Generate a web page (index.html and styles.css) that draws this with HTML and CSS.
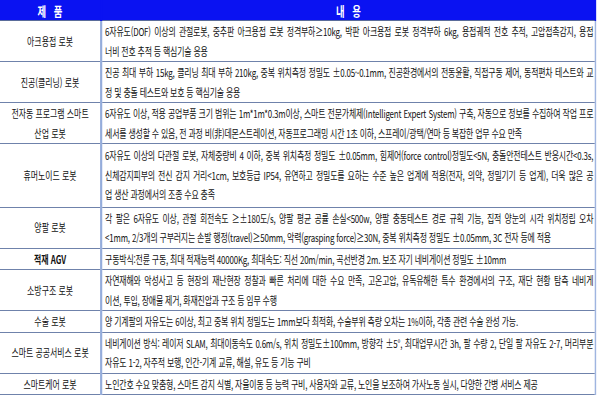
FILE: index.html
```html
<!DOCTYPE html>
<html lang="ko">
<head>
<meta charset="utf-8">
<title>로봇 제품</title>
<link rel="stylesheet" href="styles.css">
</head>
<body>
<div class="frame">
<div class="sheet">
<table class="spec">
  <thead>
    <tr><th class="h1">제 품</th><th class="h2">내 용</th></tr>
  </thead>
  <tbody>
    <tr><td class="c1">아크용접 로봇</td><td class="c2"><span class="ln">6자유도(DOF) 이상의 관절로봇, 중추판 아크용접 로봇 정격부하≥10kg, 박판 아크용접 로봇 정격부하 6kg, 용접궤적 전호 추적, 고압접촉감지, 용접</span><span class="ln">너비 전호 추적 등 핵심기술 응용</span></td></tr>
    <tr><td class="c1">진공(클리닝) 로봇</td><td class="c2"><span class="ln">진공 최대 부하 15kg, 클리닝 최대 부하 210kg, 중복 위치측정 정밀도 ±0.05~0.1mm, 진공환경에서의 전동윤활, 직접구동 제어, 동적편차 테스트와 교</span><span class="ln">정 및 충돌 테스트와 보호 등 핵심기술 응용</span></td></tr>
    <tr><td class="c1">전자동 프로그램 스마트 산업 로봇</td><td class="c2"><span class="ln">6자유도 이상, 적용 공업부품 크기 범위는 1m*1m*0.3m이상, 스마트 전문가체제(Intelligent Expert System) 구축, 자동으로 정보를 수집하여 작업 프로</span><span class="ln">세서를 생성할 수 있음, 전 과정 비(非)데몬스트레이션, 자동프로그래밍 시간 1초 이하, 스프레이/광택/연마 등 복잡한 업무 수요 만족</span></td></tr>
    <tr class="tall"><td class="c1">휴머노이드 로봇</td><td class="c2"><span class="ln">6자유도 이상의 다관절 로봇, 자체중량비 4 이하, 중복 위치측정 정밀도 ±0.05mm, 힘제어(force control)정밀도&lt;5N, 충돌안전테스트 반응시간&lt;0.3s,</span><span class="ln">신체감지피부의 전신 감지 거리&lt;1cm, 보호등급 IP54, 유연하고 정밀도를 요하는 수준 높은 업계에 적용(전자, 의약, 정밀기기 등 업계), 더욱 많은 공</span><span class="ln">업 생산 과정에서의 조종 수요 충족</span></td></tr>
    <tr><td class="c1">양팔 로봇</td><td class="c2"><span class="ln">각 팔은 6자유도 이상, 관절 회전속도 ≥±180도/s, 양팔 평균 공률 손실&lt;500w, 양팔 충동테스트 경로 규획 기능, 집적 양눈의 시각 위치정립 오차</span><span class="ln">&lt;1mm, 2/3개의 구부러지는 손발 행정(travel)≥50mm, 악력(grasping force)≥30N, 중복 위치측정 정밀도 ±0.05mm, 3C 전자 등에 적용</span></td></tr>
    <tr><td class="c1 b">적재 AGV</td><td class="c2"><span class="ln">구동박식:전륜 구동, 최대 적재능력 40000Kg, 최대속도: 직선 20m/min, 곡선반경 2m. 보조 자기 네비게이션 정밀도 ±10mm</span></td></tr>
    <tr><td class="c1">소방구조 로봇</td><td class="c2"><span class="ln">자연재해와 악성사고 등 현장의 재난현장 정찰과 빠른 처리에 대한 수요 만족, 고온고압, 유독유해한 특수 환경에서의 구조, 재단 현황 탐측 네비게</span><span class="ln">이션, 투입, 장애물 제거, 화재진압과 구조 등 임무 수행</span></td></tr>
    <tr><td class="c1">수술 로봇</td><td class="c2"><span class="ln">양 기계팔의 자유도는 6이상, 최고 중복 위치 정밀도는 1mm보다 최적화, 수술부위 측량 오차는 1%이하, 각종 관련 수술 완성 가능.</span></td></tr>
    <tr><td class="c1">스마트 공공서비스 로봇</td><td class="c2"><span class="ln">네비게이션 방식: 레이저 SLAM, 최대이동속도 0.6m/s, 위치 정밀도±100mm, 방향각 ±5°, 최대업무시간 3h, 팔 수량 2, 단일 팔 자유도 2-7, 머리부분</span><span class="ln">자유도 1-2, 자주적 보행, 인간-기계 교류, 해설, 유도 등 기능 구비</span></td></tr>
    <tr><td class="c1">스마트케어 로봇</td><td class="c2"><span class="ln">노인간호 수요 맞춤형, 스마트 감지 식별, 자율이동 등 능력 구비, 사용자와 교류, 노인을 보조하여 가사노동 실시, 다양한 간병 서비스 제공</span></td></tr>
  </tbody>
</table>
</div>
</div>
</body>
</html>
```
FILE: styles.css
```css
html, body {
  margin: 0;
  padding: 0;
  background: #ffffff;
}
body {
  font-family: "Noto Sans CJK KR", "Noto Sans", sans-serif;
  color: #111111;
}
.frame {
  width: 600px;
  height: 400px;
  overflow: hidden;
}
.sheet {
  width: 828px;
  transform: scaleX(0.72);
  transform-origin: 0 0;
}
.spec {
  width: 828px;
  border-collapse: collapse;
  table-layout: fixed;
  font-size: 11px;
}
.spec th {
  background: #0a12f2;
  color: #ffffff;
  font-weight: 700;
  font-size: 13px;
  height: 20px;
  line-height: 19px;
  padding: 0;
  text-align: center;
  border-bottom: 1px solid #5a6c9a;
  word-spacing: 7px;
}
.spec .h1 {
  width: 139px;
  border-right: 3px solid #0a12f2;
}
.spec .h2 {
  border-right: 2px solid #0a12f2;
}
.spec td {
  line-height: 19.5px;
  padding: 1px 2px 0 4px;
  border-bottom: 1px solid #6f82ab;
  vertical-align: middle;
}
.spec .c1 {
  text-align: center;
  border-right: 3px solid #94acdb;
  padding-left: 8px;
  padding-right: 8px;
  word-break: keep-all;
}
.spec .c2 {
  border-right: 2px solid #9fb5e0;
  letter-spacing: -0.25px;
}
.ln {
  display: block;
  white-space: nowrap;
  text-align: justify;
  text-align-last: justify;
}
.ln:last-child {
  text-align-last: left;
}
.spec .b {
  font-weight: 700;
}
.spec .tall td {
  padding-top: 2px;
  padding-bottom: 2px;
}
```
